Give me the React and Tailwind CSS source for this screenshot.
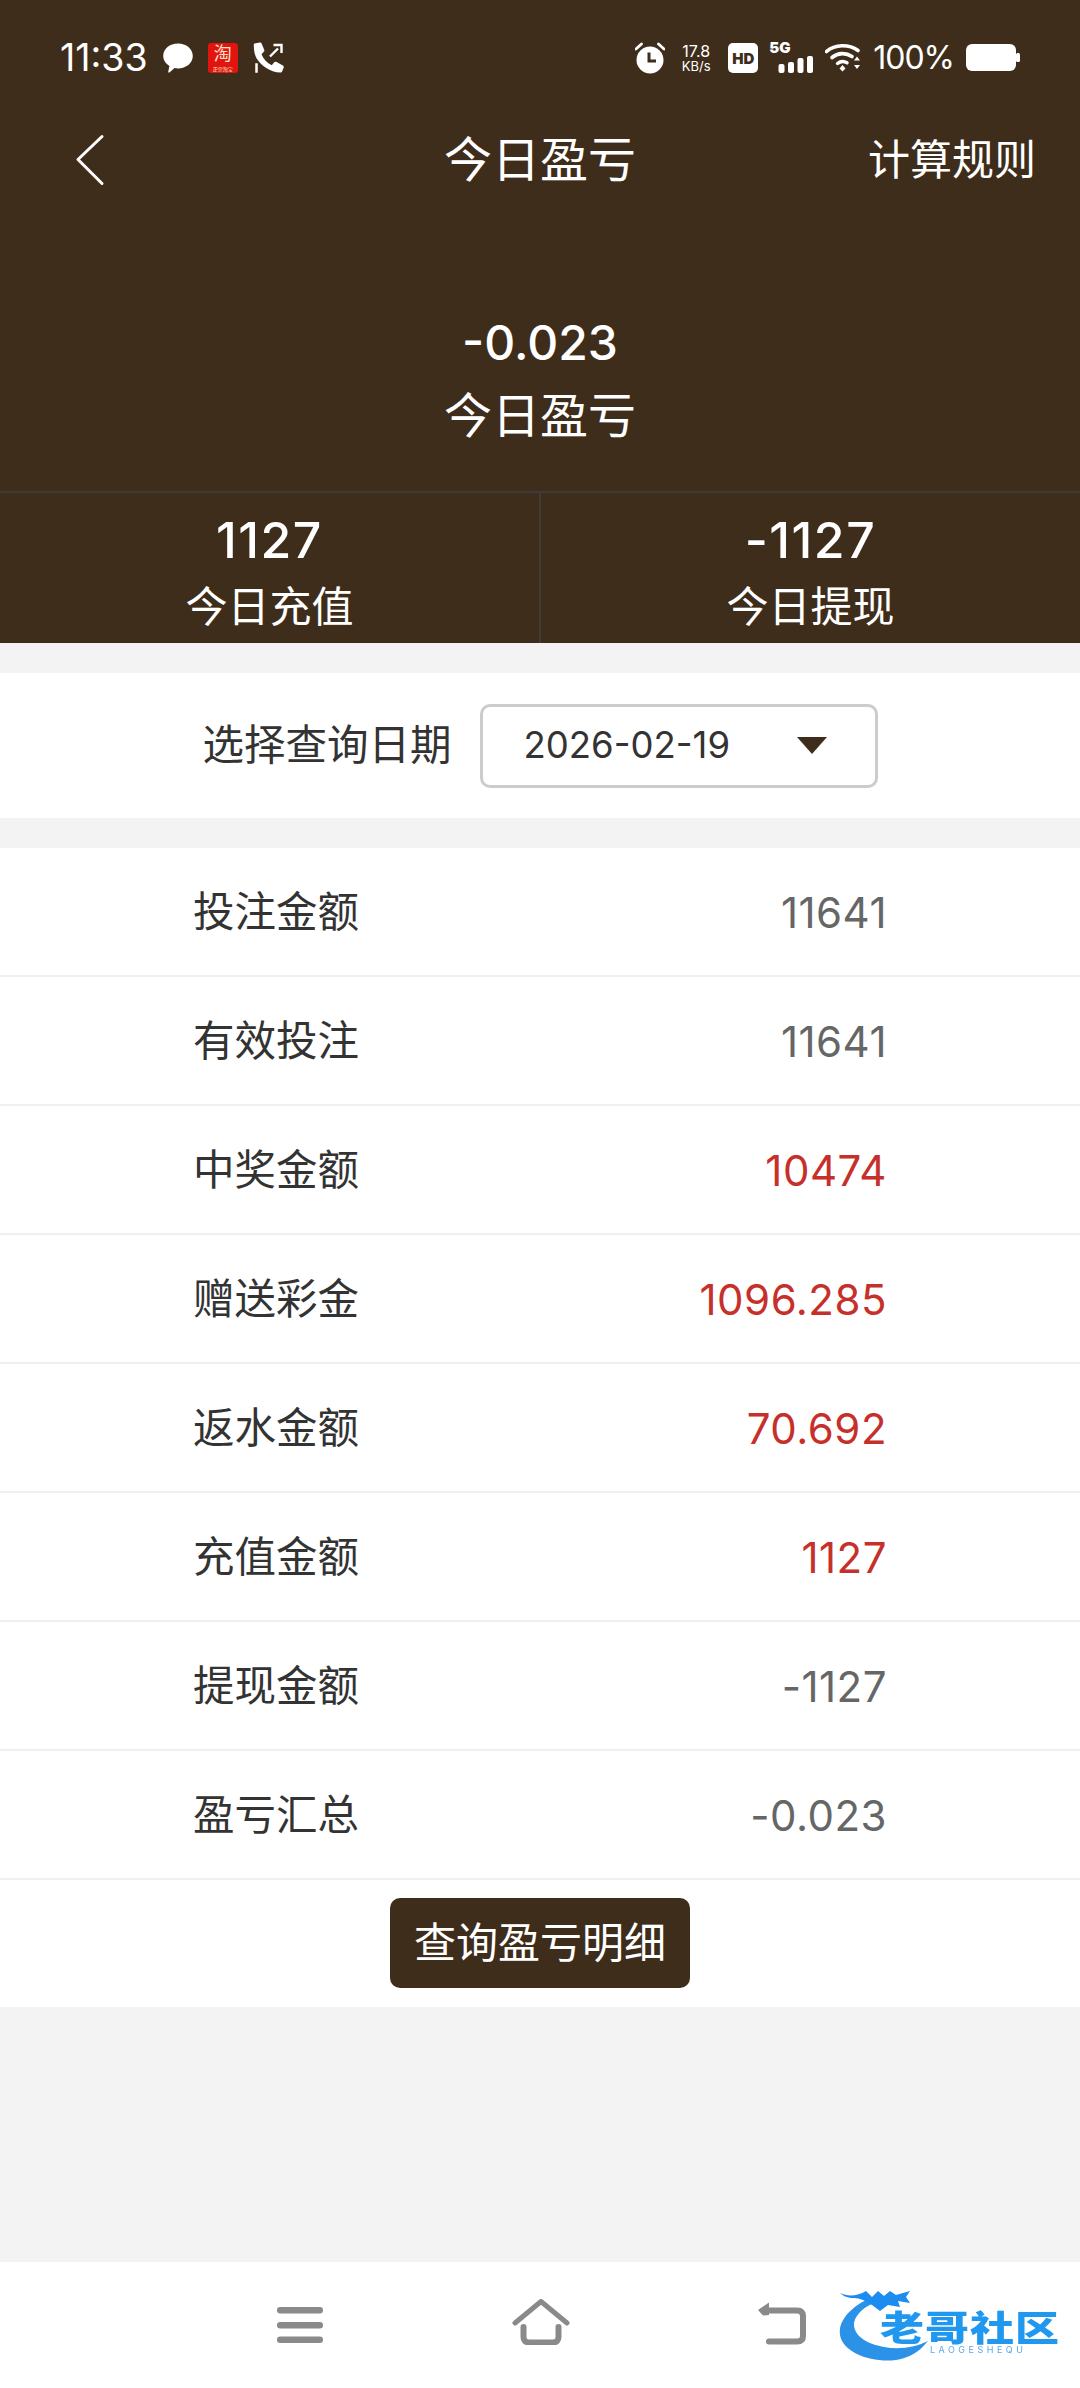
const sans = "font-['Inter','Noto_Sans_CJK_SC',sans-serif]";

function Status() {
  return (
    <div className="flex h-[116px] items-center justify-between pl-[60px] pr-[60px] text-white">
      <div className="flex items-center">
        <span className="text-[37.5px] leading-none">11:33</span>
        <svg className="ml-[15px]" width="30" height="30" viewBox="0 0 30 30" fill="white">
          <path d="M15 0.5C23.3 0.5 29.8 5.9 29.8 13 29.8 20.2 23.2 25.4 15 25.4c-1.2 0-2.4-.1-3.500-.3L6.500 29.500c-.7.400-1.400-.100-1.200-.900L6.400 23C3 20.800.200 17.300.200 13 .200 5.900 6.700.500 15 .500z" />
        </svg>
        <div className="relative ml-[15px] flex h-[30px] w-[30px] flex-col items-center overflow-hidden rounded-[3px] bg-[#e2140f]">
          <span className="text-[18px] leading-[22px] text-[#fde3c8]">淘</span>
          <span className="text-[5px] leading-[8px] text-[#fff3d0]">正宗淘宝</span>
        </div>
        <svg className="ml-[15px]" width="32" height="32" viewBox="0 0 32 32" fill="white">
          <path d="M1.500 1.500 7 0.500c.8-.1 1.300.300 1.600 1L11.300 8c.2.700 0 1.300-.500 1.800L8.500 12.200C10.500 17 14 20.800 18.800 23.200l2.400-3c.5-.500 1.200-.700 1.900-.400l6.800 3.800c.7.400 1 1 .8 1.800l-1.500 3.800c-.300.800-1 1.300-1.800 1.300C17 30.500 8 23 4 17 2 14 .800 9 .800 3.200c0-.8.100-1.400.700-1.700z" />
          <path d="M17 14.500 25 6.500M20.500 3H28.500V11" stroke="white" strokeWidth="2.400" fill="none" />
          <rect x="2" y="21" width="3" height="10" fill="white" stroke="#3f2d1c" strokeWidth="0.500" />
        </svg>
      </div>
      <div className="flex items-center">
        <svg width="30" height="32" viewBox="0 0 30 32" fill="white">
          <circle cx="15" cy="18" r="13.500" />
          <path d="M14 10.500v8.500h7" stroke="#3f2d1c" strokeWidth="3" fill="none" />
          <path d="M1 7 6.500 2M29 7 23.500 2" stroke="white" strokeWidth="2.800" strokeLinecap="round" />
        </svg>
        <div className="ml-[13px] flex w-[36px] flex-col items-center">
          <span className="text-[16px] leading-[16px]">17.8</span>
          <span className="text-[13px] leading-[14px]">KB/s</span>
        </div>
        <div className="ml-[14px] flex h-[30px] w-[30px] items-center justify-center rounded-[5px] bg-white">
          <span className="text-[15px] font-black leading-none text-[#3f2d1c]">HD</span>
        </div>
        <div className="relative ml-[11px] h-[32px] w-[44px]">
          <span className="absolute left-0 top-[-3px] text-[15px] font-black leading-[18px]">5G</span>
          <svg className="absolute left-0 top-0" width="44" height="32" viewBox="0 0 44 32" fill="white">
            <rect x="9.500" y="22" width="6" height="9" rx="2" />
            <rect x="19" y="20" width="6" height="11" rx="2" />
            <rect x="28.500" y="16" width="6" height="15" rx="2" />
            <rect x="38" y="14" width="6" height="17" rx="2" />
          </svg>
        </div>
        <svg className="ml-[12px]" width="36" height="30" viewBox="0 0 36 30" fill="none">
          <path d="M1.500 8.500C10 1 24 1 33 7.500" stroke="white" strokeWidth="3.600" strokeLinecap="round" />
          <path d="M7 14.500C13 9.500 21 9.500 27 13.500" stroke="white" strokeWidth="3.600" strokeLinecap="round" />
          <path d="M12.500 20.500C15.500 18 19 18 22 19.800" stroke="white" strokeWidth="3.400" strokeLinecap="round" />
          <path d="M14.500 25.500 17.500 22 20.500 25.500 17.500 28.500z" fill="white" />
          <path d="M29 17.500 32 13.500 35 17.500zM29 22H35L32 26z" fill="white" />
        </svg>
        <span className="ml-[12px] text-[32px] leading-none tracking-[-1px]">100%</span>
        <svg className="ml-[12px]" width="54" height="28" viewBox="0 0 54 28" fill="white">
          <rect x="0" y="0" width="50" height="27" rx="6" />
          <rect x="50" y="9" width="4" height="9" rx="1.500" />
        </svg>
      </div>
    </div>
  );
}

function Nav() {
  return (
    <div className="grid h-[88px] grid-cols-[1fr_auto_1fr] items-center text-white">
      <div className="pl-[74px]">
        <svg width="32" height="52" viewBox="0 0 32 52" fill="none">
          <path d="M28 2.500 4 25.500 28 49.500" stroke="white" strokeWidth="3" strokeLinecap="round" strokeLinejoin="round" />
        </svg>
      </div>
      <div className="text-[48px] leading-none">今日盈亏</div>
      <div className="pr-[44px] text-right text-[42px] leading-none">计算规则</div>
    </div>
  );
}

function Stat({ value, label, divider }) {
  return (
    <div className={`flex flex-1 flex-col items-center pt-[22px] ${divider ? "border-l-2 border-[#3b3b3b]" : ""}`}>
      <div className="text-[50px] font-medium leading-[50px] tracking-[1.5px]">{value}</div>
      <div className="mt-[17px] text-[42px] leading-[50px]">{label}</div>
    </div>
  );
}

function Row({ label, value, red }) {
  return (
    <div className="flex h-[129px] items-center justify-between border-b-2 border-[#f0f0f0] px-[193px] pt-[3px]">
      <span className="text-[41.5px] leading-none text-[#333333]">{label}</span>
      <span className={`text-[42px] leading-none tracking-[0.5px] ${red ? "text-[#c6302b]" : "text-[#666666]"}`}>{value}</span>
    </div>
  );
}

const rows = [
  ["投注金额", "11641"],
  ["有效投注", "11641"],
  ["中奖金额", "10474", true],
  ["赠送彩金", "1096.285", true],
  ["返水金额", "70.692", true],
  ["充值金额", "1127", true],
  ["提现金额", "-1127"],
  ["盈亏汇总", "-0.023"],
];

function Logo() {
  return (
    <div className="absolute left-[838px] top-[2285px] h-[78px] w-[230px] blur-[0.6px]">
      <svg className="absolute left-0 top-0" width="110" height="78" viewBox="0 0 110 78" fill="none">
        <path d="M34 12C12 22 0 36 2 50 5 68 34 78 58 75 72 73 82 66 90 56 78 62 62 65 46 62 28 59 15 50 16 38 18 28 28 20 42 16z" fill="#2c92e8" />
        <path d="M2 8C10 12 20 11 28 6L34 12 40 6 46 11 52 6 58 10 72 6 68 12 72 18 60 16 62 22 50 20 42 26 34 20C28 16 22 13 16 13 10 13 5 11 2 8z" fill="#1c8cf0" />
      </svg>
      <span className="absolute left-[42px] top-[26px] origin-top scale-y-[0.8] whitespace-nowrap text-[44px] font-black leading-[36px] tracking-[1px] text-[#2098f0] font-['Noto_Sans_CJK_SC',sans-serif]">老哥社区</span>
      <span className="absolute left-[92px] top-[60px] whitespace-nowrap text-[9px] leading-[10px] tracking-[3.500px] text-[#5aa9e6]">LAOGESHEQU</span>
    </div>
  );
}

export default function App() {
  return (
    <div className={`relative flex h-[2388px] w-[1080px] flex-col overflow-hidden bg-[#f3f3f3] ${sans}`}>
      <header className="h-[643px] bg-[#3f2d1c] text-white">
        <Status />
        <Nav />
        <div className="flex h-[287px] flex-col items-center pt-[114px]">
          <div className="text-[48px] font-medium leading-[50px]">-0.023</div>
          <div className="mt-[22px] text-[48px] leading-[52px]">今日盈亏</div>
        </div>
        <div className="flex h-[152px] border-t-2 border-[#3b3b3b]">
          <Stat value="1127" label="今日充值" />
          <Stat value="-1127" label="今日提现" divider />
        </div>
      </header>

      <div className="mt-[30px] flex h-[145px] items-center justify-center bg-white">
        <span className="text-[41.5px] leading-none text-[#333333]">选择查询日期</span>
        <div className="ml-[28px] flex h-[84px] w-[398px] items-center justify-between rounded-[10px] border-[3px] border-[#cccccc] pl-[41px] pr-[48px]">
          <span className="text-[36.5px] leading-none text-[#333333]">2026-02-19</span>
          <span className="h-0 w-0 border-x-[15px] border-t-[17px] border-x-transparent border-t-[#3f2d1c]" />
        </div>
      </div>

      <div className="mt-[30px] bg-white">
        {rows.map(([l, v, r]) => (
          <Row key={l} label={l} value={v} red={r} />
        ))}
        <div className="flex h-[127px] justify-center pt-[18px]">
          <div className="flex h-[90px] w-[300px] items-center justify-center rounded-[10px] bg-[#3f2d1c] text-[42px] leading-none text-white">查询盈亏明细</div>
        </div>
      </div>

      <div className="mt-auto flex h-[126px] items-start bg-white">
        <svg className="ml-[277px] mt-[45px]" width="46" height="36" viewBox="0 0 46 36" fill="#8a8a8a">
          <rect x="0" y="0" width="46" height="6.500" rx="3.200" />
          <rect x="0" y="15" width="46" height="6.500" rx="3.200" />
          <rect x="0" y="29.500" width="46" height="6.500" rx="3.200" />
        </svg>
        <svg className="ml-[189px] mt-[37px]" width="58" height="46" viewBox="0 0 58 46" fill="none">
          <path d="M3 24 29 2.500 55 24" stroke="#8a8a8a" strokeWidth="5" strokeLinecap="round" strokeLinejoin="round" />
          <path d="M11.500 28V38C11.500 41.500 13.500 43.500 17 43.500H41C44.500 43.500 46.500 41.500 46.500 38V28" stroke="#8a8a8a" strokeWidth="6" strokeLinecap="round" />
        </svg>
        <svg className="ml-[186px] mt-[39px]" width="50" height="44" viewBox="0 0 50 44" fill="none">
          <path d="M7 9.500H41C45 9.500 47 11.500 47 15.500V35C47 38.500 45 40.500 41 40.500H13" stroke="#8a8a8a" strokeWidth="6" strokeLinecap="round" />
          <path d="M13 1.500 2 9 7 14.500 13 14z" fill="#8a8a8a" />
        </svg>
      </div>
      <Logo />
    </div>
  );
}
